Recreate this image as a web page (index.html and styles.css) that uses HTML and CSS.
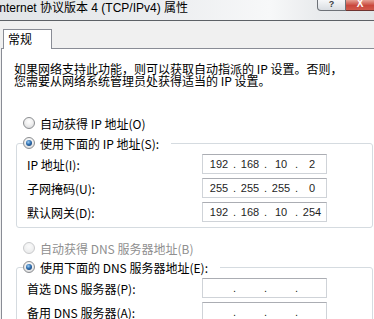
FILE: index.html
```html
<!DOCTYPE html>
<html lang="zh-CN">
<head>
    <meta charset="UTF-8">
    <title>Internet 协议版本 4 (TCP/IPv4) 属性</title>
    <link rel="stylesheet" href="styles.css">
</head>
<body>
    <div class="titlebar">
        <span class="title">Internet 协议版本 4 (TCP/IPv4) 属性</span>
        <div class="caption">
            <span class="btn-help">?</span>
            <span class="btn-close">X</span>
        </div>
    </div>

    <div class="tabs"><span class="tab">常规</span></div>

    <div class="panel">
        <p class="intro">如果网络支持此功能，则可以获取自动指派的 IP 设置。否则，<br>您需要从网络系统管理员处获得适当的 IP 设置。</p>

        <label class="opt"><span class="radio"></span>自动获得 IP 地址(O)</label>
        <fieldset class="group">
            <legend class="opt"><span class="radio on"></span>使用下面的 IP 地址(S):</legend>
            <div class="rows">
                <div class="row">
                    <label>IP 地址(I):</label>
                    <div class="ip"><span>192</span><b>.</b><span>168</span><b>.</b><span>10</span><b>.</b><span>2</span></div>
                </div>
                <div class="row">
                    <label>子网掩码(U):</label>
                    <div class="ip"><span>255</span><b>.</b><span>255</span><b>.</b><span>255</span><b>.</b><span>0</span></div>
                </div>
                <div class="row">
                    <label>默认网关(D):</label>
                    <div class="ip"><span>192</span><b>.</b><span>168</span><b>.</b><span>10</span><b>.</b><span>254</span></div>
                </div>
            </div>
        </fieldset>

        <label class="opt off"><span class="radio"></span>自动获得 DNS 服务器地址(B)</label>
        <fieldset class="group dns">
            <legend class="opt"><span class="radio on"></span>使用下面的 DNS 服务器地址(E):</legend>
            <div class="rows">
                <div class="row">
                    <label>首选 DNS 服务器(P):</label>
                    <div class="ip"><span></span><b>.</b><span></span><b>.</b><span></span><b>.</b><span></span></div>
                </div>
                <div class="row">
                    <label>备用 DNS 服务器(A):</label>
                    <div class="ip"><span></span><b>.</b><span></span><b>.</b><span></span><b>.</b><span></span></div>
                </div>
            </div>
        </fieldset>
    </div>
</body>
</html>
```

FILE: styles.css
```css
*{margin:0;padding:0;box-sizing:border-box;}
body{
    width:374px;
    height:319px;
    overflow:hidden;
    background:#f0f0f0;
    font:12px "Noto Sans CJK SC", sans-serif;
    color:#000;
}

/* title bar */
.titlebar{
    height:21px;
    display:flex;
    align-items:flex-start;
    overflow:hidden;
    border-bottom:1px solid #5d6166;
    background:linear-gradient(to right,#e2e5e8 0%,#eceef0 45%,#f7f8f9 72%,#e9ebed 85%,#e4e6e8 100%);
}
.title{
    margin:1px 0 0 -4px;
    font:12px/14px "Liberation Sans","Noto Sans CJK SC",sans-serif;
    white-space:nowrap;
}
.caption{margin-left:auto;display:flex;}
.btn-help{
    width:29px;
    height:11px;
    border:1px solid #6d7177;
    border-top:none;
    border-radius:0 0 0 4px;
    background:linear-gradient(#f6f7f9,#d9dde2);
    font:bold 9px/8px "Liberation Sans",sans-serif;
    color:#3a3d42;
    text-align:center;
}
.btn-close{
    width:28px;
    height:11px;
    border-bottom:1px solid #6e3330;
    background:linear-gradient(#e6a194,#c9473c 55%,#d25a4c);
    font:bold 10px/7px "Liberation Sans",sans-serif;
    color:#fff;
    text-align:center;
}

/* tabs */
.tabs{display:flex;padding:8px 0 0 3px;}
.tab{
    position:relative;
    z-index:1;
    width:49px;
    height:20px;
    margin-bottom:-1px;
    padding-left:4px;
    line-height:18px;
    background:#fff;
    border:1px solid #898c95;
    border-bottom:none;
}
.panel{
    height:280px;
    margin-left:1px;
    padding:14px 0 0 12px;
    background:#fff;
    border-top:1px solid #898c95;
    border-left:1px solid #898c95;
}
.intro{line-height:12px;}

/* radio options */
.opt{
    display:flex;
    align-items:center;
    gap:5px;
    height:16px;
    white-space:nowrap;
}
label.opt{margin:28px 0 0 9px;}
label.opt.off{margin-top:12px;color:#8f8f8f;}
.radio{
    position:relative;
    width:12px;
    height:12px;
    border-radius:50%;
    border:1px solid #8c8e91;
    background:radial-gradient(circle at 50% 35%,#ffffff 0%,#f0f0f0 45%,#cfd1d4 100%);
}
.radio.on::after{
    content:"";
    position:absolute;
    left:2px;
    top:2px;
    width:6px;
    height:6px;
    border-radius:50%;
    background:radial-gradient(circle at 40% 35%,#9fd0f7 0%,#2f6fb0 45%,#0f2f5c 100%);
}
.off .radio{
    border-color:#c9cacc;
    background:radial-gradient(circle at 50% 35%,#fbfbfb,#e6e7e8);
}

/* group boxes */
.group{
    width:357px;
    margin:4px 0 0 2px;
    border:1px solid #d5dbe0;
    border-radius:3px;
}
.group.dns{margin-top:3px;}
.group legend{margin-left:6px;padding-right:12px;}
.rows{
    display:flex;
    flex-direction:column;
    gap:4px;
    padding:3px 0 5px 10px;
}
.row{display:flex;align-items:center;height:20px;}
.row label{width:175px;white-space:nowrap;}

/* ip address fields */
.ip{
    display:flex;
    width:125px;
    height:20px;
    padding-left:2px;
    background:#fff;
    border:1px solid #cfd3d8;
    border-top-color:#abadb3;
    font:11px/18px "Liberation Sans",sans-serif;
    color:#1e1e1e;
}
.ip span{width:28px;text-align:center;}
.ip b{width:3px;font-weight:normal;}
```
